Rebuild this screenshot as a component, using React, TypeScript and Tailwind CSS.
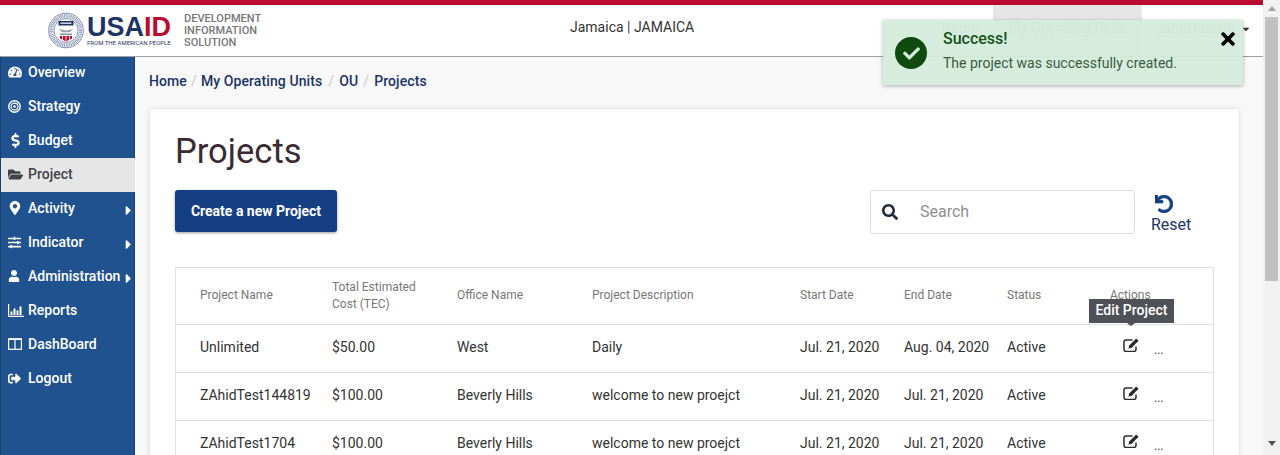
import type { ReactNode } from "react";
import {
  FaCheck,
  FaCaretDown,
  FaCaretRight,
  FaDollarSign,
  FaFolderOpen,
  FaMapMarkerAlt,
  FaSearch,
  FaSignOutAlt,
  FaSlidersH,
  FaTachometerAlt,
  FaTimes,
  FaUndo,
  FaUser,
} from "react-icons/fa";

const FONT = "font-['Roboto',sans-serif]";

function TargetIcon() {
  return (
    <svg viewBox="0 0 16 16" className="h-[13px] w-[13px]" fill="none" stroke="currentColor">
      <circle cx="8" cy="8" r="7" strokeWidth="1.8" />
      <circle cx="8" cy="8" r="4.2" strokeWidth="1.4" />
      <circle cx="8" cy="8" r="1.6" fill="currentColor" strokeWidth="0" />
    </svg>
  );
}

function ColumnsIcon() {
  return (
    <svg viewBox="0 0 14 12" className="h-[12px] w-[14px]" fill="none" stroke="currentColor">
      <rect x="0.6" y="0.9" width="12.8" height="10.4" strokeWidth="1.2" />
      <path d="M7 1v10" strokeWidth="1.2" />
      <path d="M0.6 1.2h12.8" strokeWidth="1.6" />
    </svg>
  );
}

function ReportsIcon() {
  return (
    <svg viewBox="0 0 16 13" className="h-[13px] w-[16px]" fill="none" stroke="currentColor">
      <path d="M0.6 0v12.4H16" strokeWidth="1.2" />
      <path d="M3.5 11V7.5M6.5 11V4.5M9.5 11V6.5M12.5 11V2.5" strokeWidth="2" />
    </svg>
  );
}

function EditIcon() {
  return (
    <svg viewBox="0 0 16 14" className="h-[14px] w-[16px] text-[#2b2b2b]" fill="none">
      <path d="M9.5 2H3a2 2 0 0 0-2 2v7.5a2 2 0 0 0 2 2h8a2 2 0 0 0 2-2V8.5" stroke="currentColor" strokeWidth="1.5" />
      <path d="M5.5 10.5l.6-3 6.6-6.6a.8.8 0 0 1 1.1 0l1.3 1.3a.8.8 0 0 1 0 1.1L8.5 9.9z" fill="currentColor" />
    </svg>
  );
}

function Seal() {
  return (
    <svg viewBox="0 0 36 36" className="h-[37px] w-[36px] shrink-0">
      <circle cx="18" cy="18" r="17.3" fill="#fff" stroke="#5b6f92" strokeWidth="0.8" />
      <circle cx="18" cy="18" r="14.6" fill="none" stroke="#8d9ab4" strokeWidth="3.6" strokeDasharray="1 0.7" />
      <circle cx="18" cy="18" r="12" fill="#fff" stroke="#33507f" strokeWidth="0.6" />
      <rect x="10.5" y="8.5" width="15" height="4.5" rx="0.6" fill="#1c3567" />
      <rect x="12.5" y="10" width="11" height="1.4" fill="#dfe4ee" />
      <path d="M11 16.5l7 1.6 7-1.6-3 3.2h-8z" fill="#9aa3b2" />
      <rect x="12" y="21" width="12" height="1.6" fill="#8a93a6" />
      <path d="M12 23.5h12v2.5l-6 3-6-3z" fill="#ba0c2f" />
      <path d="M14.5 23.5v4M18 23.5v5M21.5 23.5v4" stroke="#fff" strokeWidth="0.8" />
    </svg>
  );
}

const NAV: { label: string; icon: ReactNode; active?: boolean; arrow?: boolean }[] = [
  { label: "Overview", icon: <FaTachometerAlt size={14} /> },
  { label: "Strategy", icon: <TargetIcon /> },
  { label: "Budget", icon: <FaDollarSign size={15} /> },
  { label: "Project", icon: <FaFolderOpen size={15} />, active: true },
  { label: "Activity", icon: <FaMapMarkerAlt size={14} />, arrow: true },
  { label: "Indicator", icon: <FaSlidersH size={13} />, arrow: true },
  { label: "Administration", icon: <FaUser size={12} />, arrow: true },
  { label: "Reports", icon: <ReportsIcon /> },
  { label: "DashBoard", icon: <ColumnsIcon /> },
  { label: "Logout", icon: <FaSignOutAlt size={13} /> },
];

const GRID = "grid grid-cols-[132px_125px_135px_208px_104px_103px_103px_127px]";

const ROWS = [
  ["Unlimited", "$50.00", "West", "Daily", "Jul. 21, 2020", "Aug. 04, 2020", "Active"],
  ["ZAhidTest144819", "$100.00", "Beverly Hills", "welcome to new proejct", "Jul. 21, 2020", "Jul. 21, 2020", "Active"],
  ["ZAhidTest1704", "$100.00", "Beverly Hills", "welcome to new proejct", "Jul. 21, 2020", "Jul. 21, 2020", "Active"],
];

const HEADERS = ["Project Name", "Total Estimated Cost (TEC)", "Office Name", "Project Description", "Start Date", "End Date", "Status", "Actions"];

export default function App() {
  return (
    <div className={`${FONT} relative flex h-[455px] w-[1280px] overflow-hidden bg-white`}>
      <div className="flex min-w-0 flex-1 flex-col">
        {/* Header */}
        <header className="h-[57px] shrink-0 border-b border-[#a0a0a0] border-t-[5px] border-t-[#ba0c2f] bg-white">
          <div className="flex h-full items-center">
            <div className="ml-[48px] flex w-[500px] items-center">
              <Seal />
              <div className="ml-[3px] flex w-[85px] flex-col">
                <div className="h-[24px] font-['Liberation_Sans',sans-serif] text-[27px] font-bold leading-[24px] text-[#1c3567]">
                  USA<span className="text-[#ba0c2f]">ID</span>
                </div>
                <div className="whitespace-nowrap text-[6px] leading-[8px] text-[#1c3567]">FROM THE AMERICAN PEOPLE</div>
              </div>
              <div className="ml-[12px] text-[11px] font-medium uppercase leading-[12px] text-[#777777]">
                Development
                <br />
                Information
                <br />
                Solution
              </div>
            </div>
            <div className="ml-[22px] w-[371px] whitespace-nowrap pb-[6px] text-[14px] text-[#333333]">Jamaica | JAMAICA</div>
            <nav className="flex h-full flex-1 text-[14px] text-[#777777]">
              <span className="flex w-[52px] items-center pb-[4px]">Home</span>
              <span className="flex w-[149px] items-center justify-center bg-[#e6e6e6] pb-[4px]">My Operating Units</span>
              <span className="ml-[15px] flex items-center pb-[4px]">
                zahid hussin
                <FaCaretDown size={10} className="ml-[6px] text-[#333333]" />
              </span>
            </nav>
          </div>
        </header>

        <div className="flex min-h-0 flex-1">
          {/* Sidebar */}
          <aside className="w-[135px] shrink-0 border-x border-[#174272] bg-[#20528f]">
            <div className="-mt-px">
              {NAV.map((item) => (
                <div
                  key={item.label}
                  className={`relative flex h-[34px] items-center whitespace-nowrap pb-[2px] text-[14px] font-medium ${
                    item.active ? "-mr-px bg-[#e6e6e6] text-[#3f4347]" : "text-white"
                  }`}
                >
                  <span className="flex w-[27px] shrink-0 pl-[7px]">{item.icon}</span>
                  {item.label}
                  {item.arrow && <FaCaretRight size={15} className="absolute left-[120px] top-[11px] text-white" />}
                </div>
              ))}
            </div>
          </aside>

          {/* Main */}
          <main className="min-w-0 flex-1 bg-[#f8f8f8] pl-[14px] pr-[24px]">
            <div className="flex h-[52px] items-center pb-[4px] text-[14px] font-medium tracking-[0.1px] text-[#1c3567]">
              <span>Home</span>
              <span className="mx-[4px] font-normal text-[#c8c8c8]">/</span>
              <span>My Operating Units</span>
              <span className="ml-[6px] mr-[5px] font-normal text-[#c8c8c8]">/</span>
              <span>OU</span>
              <span className="mx-[5px] font-normal text-[#c8c8c8]">/</span>
              <span>Projects</span>
            </div>

            <section className="ml-px h-[400px] rounded-[3px] bg-white px-[25px] pt-[20px] shadow-[0_0_5px_rgba(0,0,0,0.14)]">
              <h1 className="text-[34.5px] font-normal leading-[44px] text-[#3a2b33]">Projects</h1>

              <div className="mt-[17px] flex items-start">
                <button
                  type="button"
                  className="h-[42px] w-[162px] rounded-[3px] bg-[#143f85] text-[14px] font-bold text-white shadow-[0_1px_3px_rgba(0,0,0,0.4)]"
                >
                  Create a new Project
                </button>
                <div className="ml-[533px] flex h-[44px] w-[265px] items-center rounded-[3px] border border-[#dcdcdc] bg-white pl-[11px]">
                  <FaSearch size={16} className="text-[#1f2a3a]" />
                  <span className="ml-[22px] text-[16px] text-[#8f8f8f]">Search</span>
                </div>
                <div className="ml-[16px] flex flex-col items-start text-[#143f85]">
                  <FaUndo size={18} stroke="currentColor" strokeWidth={24} className="ml-[4px] mt-[5px]" />
                  <span className="text-[16px] leading-[24px] text-[#1c3567]">Reset</span>
                </div>
              </div>

              <div className="mt-[30px] w-[1039px] border border-[#dee2e6]">
                <div className={`${GRID} h-[56px] items-center pb-px text-[12px] leading-[17px] text-[#777777]`}>
                  {HEADERS.map((h) => (
                    <div key={h} className="pl-[24px] pr-[6px]">
                      {h}
                    </div>
                  ))}
                </div>
                {ROWS.map((row) => (
                  <div key={row[0]} className={`${GRID} h-[48px] items-center border-t border-[#dee2e6] pb-[2px] text-[14px] text-[#333333]`}>
                    {row.map((cell, i) => (
                      <div key={i} className="whitespace-nowrap pl-[24px]">
                        {cell}
                      </div>
                    ))}
                    <div className="flex items-center pb-[6px] pl-[37px] text-[#333333]">
                      <EditIcon />
                      <span className="ml-[15px] mt-[10px] text-[12px] leading-none">...</span>
                    </div>
                  </div>
                ))}
              </div>
            </section>
          </main>
        </div>
      </div>

      {/* Scrollbar */}
      <div className="flex w-[17px] shrink-0 flex-col items-center bg-[#f1f1f1]">
        <div className="mt-[6px] h-0 w-0 border-x-[4px] border-b-[5px] border-x-transparent border-b-[#a3a3a3]" />
        <div className="ml-[-1px] mt-[6px] h-[264px] w-[13px] bg-[#c1c1c1]" />
        <div className="mt-[160px] h-0 w-0 border-x-[4px] border-t-[5px] border-x-transparent border-t-[#505050]" />
      </div>

      {/* Edit tooltip */}
      <div className="absolute left-[1089px] top-[299px] flex h-[24px] w-[85px] items-center justify-center bg-[#4e5258] pb-px text-[14px] font-medium text-white">
        Edit Project
        <span className="absolute left-[38px] top-full h-0 w-0 border-x-[4px] border-t-[3px] border-x-transparent border-t-[#4e5258]" />
      </div>

      {/* Success toast */}
      <div className="absolute left-[883px] top-[20px] flex h-[65px] w-[360px] bg-[#d4ecdb]/95 shadow-[0_1px_4px_rgba(0,0,0,0.3)]">
        <div className="ml-[12px] mt-[17px] flex h-[32px] w-[32px] items-center justify-center rounded-full bg-[#0f4a0f]">
          <FaCheck size={17} className="text-[#d4ecdb]" />
        </div>
        <div className="ml-[16px] mt-[8px]">
          <div className="text-[16px] font-medium leading-[22px] text-[#155018]">Success!</div>
          <div className="mt-[3px] text-[14px] leading-[20px] text-[#3c5a42]">The project was successfully created.</div>
        </div>
        <FaTimes size={20} className="absolute left-[335px] top-[9px] text-black" />
      </div>
    </div>
  );
}
